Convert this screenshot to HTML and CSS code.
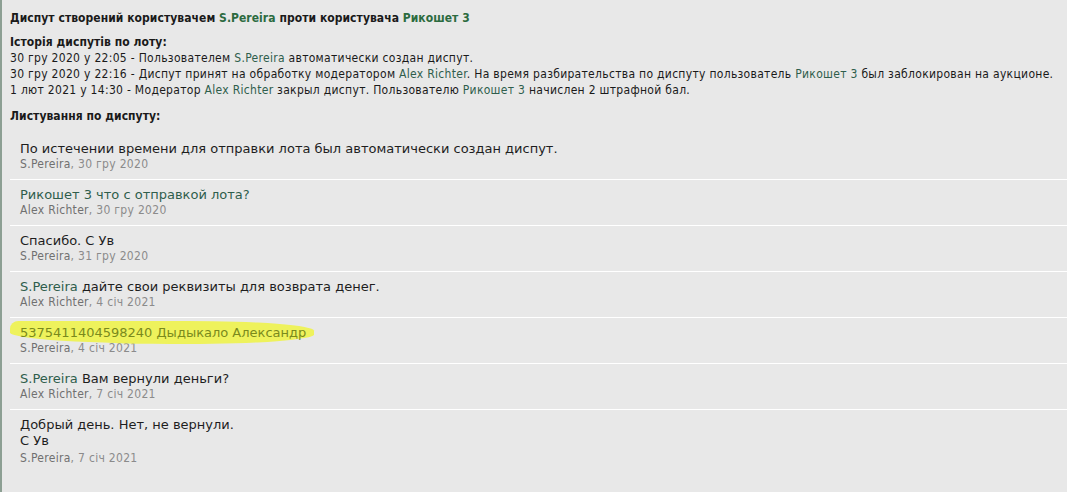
FILE: index.html
```html
<html>

<head>
  <title>
    Диспут
  </title>
  <link rel="stylesheet" href="styles.css">
</head>

<body>
  <div class="dispute">
    <div class="title">
      Диспут створений користувачем <a class="user" href="#">S.Pereira</a> проти користувача <a class="user" href="#">Рикошет 3</a>
    </div>

    <div class="heading heading-history">Історія диспутів по лоту:</div>
    <div class="history">
      <div class="history-line">30 гру 2020 у 22:05 - Пользователем <a class="link" href="#">S.Pereira</a> автоматически создан диспут.</div>
      <div class="history-line">30 гру 2020 у 22:16 - Диспут принят на обработку модератором <a class="link" href="#">Alex Richter</a>. На время разбирательства по диспуту пользователь <a class="link" href="#">Рикошет 3</a> был заблокирован на аукционе.</div>
      <div class="history-line">1 лют 2021 у 14:30 - Модератор <a class="link" href="#">Alex Richter</a> закрыл диспут. Пользователю <a class="link" href="#">Рикошет 3</a> начислен 2 штрафной бал.</div>
    </div>

    <div class="heading heading-messages">Листування по диспуту:</div>
    <div class="messages">
      <div class="message">
        <div class="message-text">По истечении времени для отправки лота был автоматически создан диспут.</div>
        <div class="message-meta"><span class="author">S.Pereira</span>, 30 гру 2020</div>
      </div>
      <div class="message">
        <div class="message-text"><a class="link" href="#">Рикошет 3 что с отправкой лота?</a></div>
        <div class="message-meta"><span class="author">Alex Richter</span>, 30 гру 2020</div>
      </div>
      <div class="message">
        <div class="message-text">Спасибо. С Ув</div>
        <div class="message-meta"><span class="author">S.Pereira</span>, 31 гру 2020</div>
      </div>
      <div class="message">
        <div class="message-text"><a class="link" href="#">S.Pereira</a> дайте свои реквизиты для возврата денег.</div>
        <div class="message-meta"><span class="author">Alex Richter</span>, 4 січ 2021</div>
      </div>
      <div class="message">
        <div class="message-text"><span class="marked">5375411404598240 Дыдыкало Александр</span></div>
        <div class="message-meta"><span class="author">S.Pereira</span>, 4 січ 2021</div>
      </div>
      <div class="message">
        <div class="message-text"><a class="link" href="#">S.Pereira</a> Вам вернули деньги?</div>
        <div class="message-meta"><span class="author">Alex Richter</span>, 7 січ 2021</div>
      </div>
      <div class="message message-last">
        <div class="message-text">Добрый день. Нет, не вернули.<br>С Ув</div>
        <div class="message-meta"><span class="author">S.Pereira</span>, 7 січ 2021</div>
      </div>
    </div>
  </div>
</body>
</html>
```

FILE: styles.css
```css
body {
  margin: 0;
  padding: 0;
  background: #e8e8e8;
}
.dispute {
  box-sizing: border-box;
  min-height: 100vh;
  border-left: 2px solid #8c9f93;
  padding: 10px 0 0 8px;
  font-family: "DejaVu Sans Condensed", "DejaVu Sans", sans-serif;
  font-size: 12px;
  line-height: 16px;
  letter-spacing: 0.3px;
  color: #1a1a1a;
}
a {
  text-decoration: none;
}
.title {
  font-weight: bold;
  letter-spacing: 0.05px;
}
a.user {
  color: #2c6b3f;
}
a.link {
  color: #2f5e4c;
}
.heading {
  font-weight: bold;
  letter-spacing: 0.05px;
}
.heading-history {
  margin-top: 8px;
}
.heading-messages {
  margin-top: 10px;
}
.messages {
  margin-top: 10px;
}
.message {
  border-top: 1px solid #ffffff;
  padding: 7px 10px 7px 10px;
}
.message:first-child {
  border-top: none;
}
.message-text {
  font-family: "DejaVu Sans", sans-serif;
  font-size: 13px;
  line-height: 16px;
  letter-spacing: 0;
  color: #1e1e1e;
}
.message-meta {
  line-height: 15px;
  color: #8b8b8b;
}
.message-last .message-meta {
  margin-top: 2px;
}
.author {
  color: #707070;
}
.marked {
  position: relative;
  z-index: 0;
  color: #7a8a1c;
}
.marked::before {
  content: "";
  position: absolute;
  left: -10px;
  right: -8px;
  top: -4px;
  bottom: -4px;
  background: #eef25c;
  border-radius: 10px 50% 50% 70% / 40% 50% 50% 60%;
  z-index: -1;
}
```
